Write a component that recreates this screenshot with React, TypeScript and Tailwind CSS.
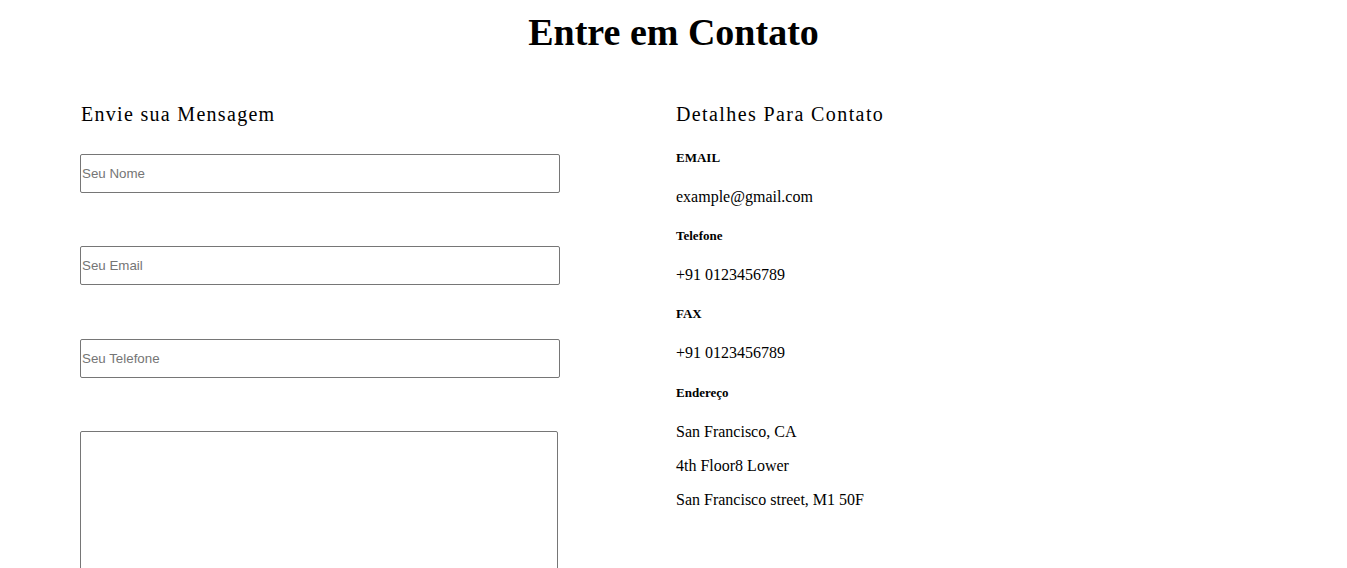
import React from 'react';

const serif = { fontFamily: '"Liberation Serif", "Times New Roman", serif' };

const fieldClass =
  "block w-[480px] h-[39px] border border-[#767676] rounded-[2px] px-[1px] text-[13.33px] text-black placeholder:text-[#757575] outline-none font-['Liberation_Sans',Arial,sans-serif]";

interface DetailProps {
  label: string;
  lines: string[];
}

function Detail({ label, lines }: DetailProps) {
  return (
    <div className="flex flex-col gap-[19.2px]">
      <span className="text-[13px] font-bold leading-[20px] text-black">{label}</span>
      <div className="flex flex-col gap-[14px]">
        {lines.map((line, idx) => (
          <span key={idx} className="text-[16px] leading-[20px] text-black">
            {line}
          </span>
        ))}
      </div>
    </div>
  );
}

export default function App() {
  const details: DetailProps[] = [
    { label: "EMAIL", lines: ["example@gmail.com"] },
    { label: "Telefone", lines: ["+91 0123456789"] },
    { label: "FAX", lines: ["+91 0123456789"] },
    { label: "Endereço", lines: ["San Francisco, CA", "4th Floor8 Lower", "San Francisco street, M1 50F"] },
  ];

  return (
    <div className="w-full min-h-[568px] bg-white overflow-hidden" style={serif}>
      <h1 className="pt-[10px] text-center text-[38px] font-bold leading-[44px] text-black">
        Entre em Contato
      </h1>

      <div className="mt-[48px] grid grid-cols-[596px_1fr] pl-[80px]">
        <div className="flex flex-col">
          <h2 className="text-[20px] leading-[24px] tracking-[1.3px] text-black pl-[1px]">
            Envie sua Mensagem
          </h2>
          <form className="mt-[28px] flex flex-col">
            <input type="text" placeholder="Seu Nome" className={fieldClass} />
            <input type="email" placeholder="Seu Email" className={`${fieldClass} mt-[53px]`} />
            <input type="tel" placeholder="Seu Telefone" className={`${fieldClass} mt-[54px]`} />
            <textarea className="mt-[53px] block w-[478px] h-[200px] border border-[#767676] rounded-[2px] resize-none outline-none" />
          </form>
        </div>

        <div className="flex flex-col">
          <h2 className="text-[20px] leading-[24px] tracking-[1.4px] text-black">
            Detalhes Para Contato
          </h2>
          <div className="mt-[21.5px] flex flex-col gap-[19.2px]">
            {details.map((d) => (
              <Detail key={d.label} label={d.label} lines={d.lines} />
            ))}
          </div>
        </div>
      </div>
    </div>
  );
}
